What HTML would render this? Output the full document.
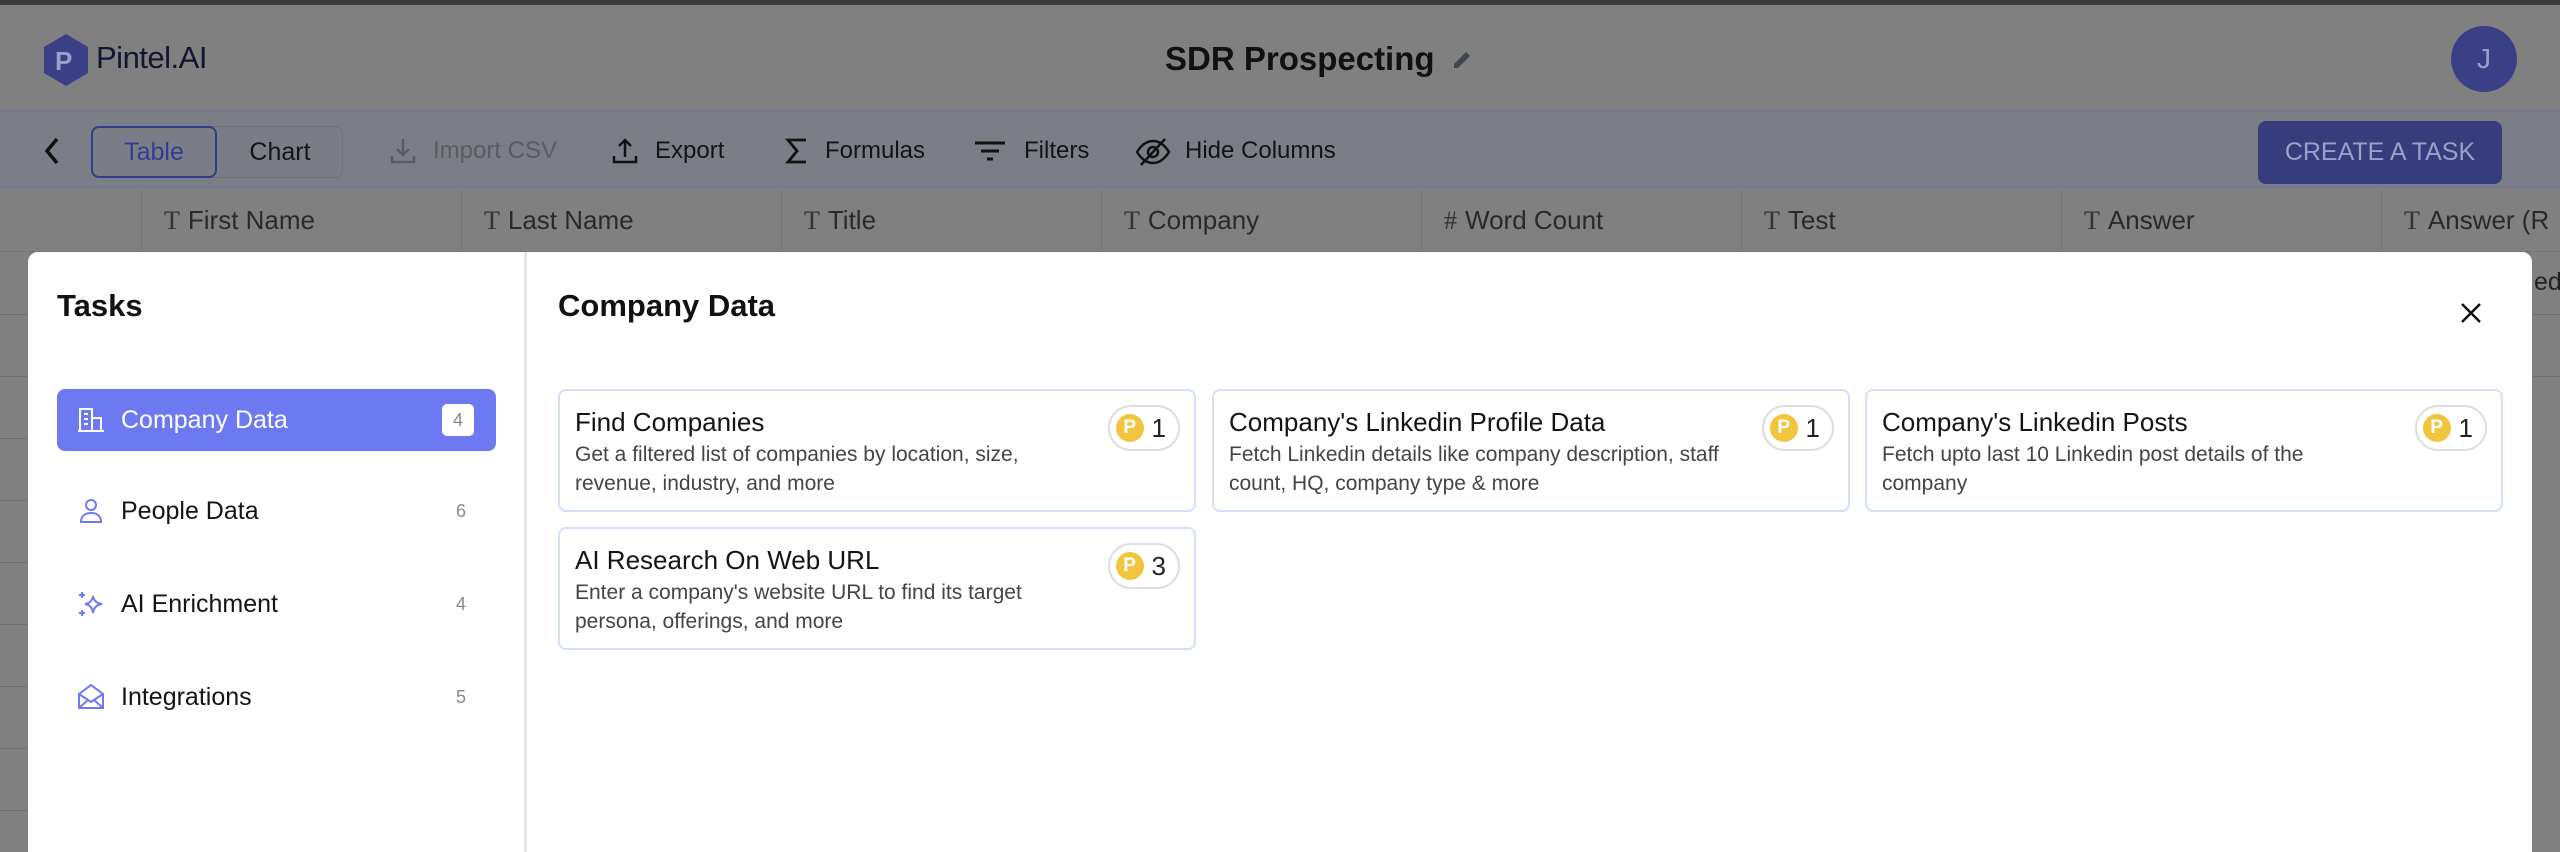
<!DOCTYPE html>
<html><head><meta charset="utf-8"><style>
*{box-sizing:border-box;margin:0;padding:0}
body{width:2560px;height:834px;overflow:hidden;background:#808080;font-family:"Liberation Sans",Arial,sans-serif;position:relative}
.top{position:absolute;left:0;top:0;width:2560px;height:5px;background:#3c3c3c}
.hdr{position:absolute;left:0;top:5px;width:2560px;height:107px;background:#808080;border-bottom:2px solid #737993}
.tb{position:absolute;left:0;top:113px;width:2560px;height:75px;background:#7b7e87;border-bottom:2px solid #737993}
.colh{position:absolute;left:0;top:189px;width:2560px;height:63px;background:#808080;border-bottom:1px solid #767676}
.abs{position:absolute}
.col{position:absolute;top:189px;height:63px;border-left:1px solid #757575;color:#2a2a2a;font-size:26px;line-height:63px;padding-left:22px;white-space:nowrap}
.col .t{font-family:"Liberation Serif",serif;color:#333;margin-right:8px}
.tool{position:absolute;top:113px;height:75px;line-height:75px;font-size:24px;color:#141414;white-space:nowrap}
.ti{position:absolute;top:137px}
.modal{position:absolute;left:28px;top:252px;width:2504px;height:600px;background:#fff;border-radius:10px 10px 0 0}
.side{position:absolute;left:0;top:0;width:499px;height:600px;border-right:3px solid #e6e6e6}
.item{position:absolute;left:29px;width:439px;height:62px;border-radius:8px;font-size:25px;color:#151515;line-height:62px;padding-left:64px}
.item .n{position:absolute;right:30px;top:0;font-size:18px;color:#888}
.item svg{position:absolute;left:20px;top:17px}
.card{position:absolute;width:638px;height:123px;border:2px solid #d5defb;border-radius:8px;padding:16px 0 0 15px}
.card h3{font-size:26px;font-weight:500;color:#141414;line-height:30px}
.card p{font-size:21px;color:#444;line-height:29px;margin-top:3px;white-space:nowrap}
.badge{position:absolute;right:14px;top:14px;height:46px;border:2px solid #ddd;border-radius:23px;padding:0 12px 0 6px;display:flex;align-items:center;gap:8px;font-size:26px;color:#222}
.coin{width:28px;height:28px;border-radius:50%;background:#f2c53f;color:#fff;font-weight:bold;font-size:19px;line-height:28px;text-align:center}
.rows div{position:absolute;left:0;width:28px;height:1px;background:#6f6f6f}
</style></head><body>
<div class="top"></div>
<div class="hdr"></div>
<svg class="abs" style="left:42px;top:34px" width="48" height="52" viewBox="0 0 48 52"><polygon points="24,0 46,13 46,39 24,52 2,39 2,13" fill="#3a3f86"/><text x="13" y="36" font-family="Liberation Sans" font-weight="bold" font-size="26" fill="#9aa0c8">P</text></svg>
<div class="abs" style="left:96px;top:40px;font-size:31px;color:#141530;letter-spacing:-0.5px">Pintel.AI</div>
<div class="abs" style="left:1165px;top:40px;font-size:33px;font-weight:bold;color:#111">SDR Prospecting</div>
<svg class="abs" style="left:1450px;top:48px" width="24" height="24" viewBox="0 0 24 24"><path d="M4 20 L4 16 L16 4 L20 8 L8 20 Z" fill="#3e4650"/></svg>
<div class="abs" style="left:2451px;top:26px;width:66px;height:66px;border-radius:50%;background:#3a3f86;color:#9aa0c8;font-size:28px;line-height:66px;text-align:center">J</div>
<div class="tb"></div>
<svg class="abs" style="left:42px;top:136px" width="20" height="30" viewBox="0 0 20 30"><path d="M15 3 L5 15 L15 27" stroke="#111" stroke-width="3.5" fill="none"/></svg>
<div class="abs" style="left:91px;top:126px;width:252px;height:52px;border-radius:8px;background:#7a7d86;border:1px solid #6f727b"></div>
<div class="abs" style="left:91px;top:126px;width:126px;height:52px;border-radius:8px;border:2px solid #333b8e;color:#343b95;font-size:25px;line-height:48px;text-align:center">Table</div>
<div class="abs" style="left:217px;top:126px;width:126px;height:52px;color:#151515;font-size:25px;line-height:52px;text-align:center">Chart</div>
<svg class="ti" style="left:389px" width="28" height="28" viewBox="0 0 28 28" fill="none" stroke="#5a5c63" stroke-width="2.5"><path d="M14 2v16M8 12l6 6 6-6M3 19v6h22v-6"/></svg>
<div class="tool" style="left:433px;color:#5a5c63">Import CSV</div>
<svg class="ti" style="left:611px" width="28" height="28" viewBox="0 0 28 28" fill="none" stroke="#111" stroke-width="2.5"><path d="M14 20V3M8 9l6-6 6 6M3 19v6h22v-6"/></svg>
<div class="tool" style="left:655px">Export</div>
<svg class="ti" style="left:785px" width="24" height="28" viewBox="0 0 24 28" fill="none" stroke="#111" stroke-width="2.8"><path d="M21 3H3l9 11-9 11h18"/></svg>
<div class="tool" style="left:825px">Formulas</div>
<svg class="ti" style="left:973px" width="34" height="28" viewBox="0 0 34 28" fill="none" stroke="#111" stroke-width="3"><path d="M2 6h30M8 14h18M14 22h6"/></svg>
<div class="tool" style="left:1024px">Filters</div>
<svg class="ti" style="left:1135px" width="36" height="30" viewBox="0 0 36 30" fill="none" stroke="#111" stroke-width="2.5"><path d="M2 15c5-8 11-11 16-11s11 3 16 11c-5 8-11 11-16 11S7 23 2 15z"/><circle cx="18" cy="15" r="5"/><path d="M6 28L30 2"/></svg>
<div class="tool" style="left:1185px">Hide Columns</div>
<div class="abs" style="left:2258px;top:121px;width:244px;height:63px;border-radius:8px;background:#373c7c;color:#9aa0c8;font-size:25px;line-height:63px;text-align:center">CREATE A TASK</div>
<div class="colh"></div>
<div class="col" style="left:141px"><span class="t">T</span>First Name</div>
<div class="col" style="left:461px"><span class="t">T</span>Last Name</div>
<div class="col" style="left:781px"><span class="t">T</span>Title</div>
<div class="col" style="left:1101px"><span class="t">T</span>Company</div>
<div class="col" style="left:1421px"><span class="t">#</span>Word Count</div>
<div class="col" style="left:1741px"><span class="t">T</span>Test</div>
<div class="col" style="left:2061px"><span class="t">T</span>Answer</div>
<div class="col" style="left:2381px"><span class="t">T</span>Answer (R</div>
<div class="abs" style="left:2534px;top:268px;font-size:25px;color:#222">ed</div>
<div class="rows"><div style="top:314px"></div><div style="top:376px"></div><div style="top:438px"></div><div style="top:500px"></div><div style="top:562px"></div><div style="top:624px"></div><div style="top:686px"></div><div style="top:748px"></div><div style="top:810px"></div></div>
<div class="abs" style="left:2532px;top:314px;width:28px;height:1px;background:#6f6f6f"></div>
<div class="abs" style="left:2532px;top:376px;width:28px;height:1px;background:#6f6f6f"></div>
<div class="modal">
 <div class="side">
  <div class="abs" style="left:29px;top:36px;font-size:31px;font-weight:bold;color:#111">Tasks</div>
  <div class="item" style="top:137px;background:#6c79f0;color:#fff">
   <svg width="28" height="28" viewBox="0 0 28 28" fill="none" stroke="#fff" stroke-width="2"><rect x="3" y="3" width="12" height="22"/><path d="M15 12h9v13H15M1 25h26M7 8h4M7 13h4M7 18h4"/></svg>Company Data
   <span class="n" style="right:22px;top:15px;width:32px;height:32px;background:#fff;border-radius:5px;line-height:32px;text-align:center;color:#888">4</span></div>
  <div class="item" style="top:228px"><svg width="28" height="28" viewBox="0 0 28 28" fill="none" stroke="#6c79f0" stroke-width="2"><circle cx="14" cy="8" r="5"/><path d="M4 25c0-6 4-9 10-9s10 3 10 9z"/></svg>People Data<span class="n">6</span></div>
  <div class="item" style="top:321px"><svg width="28" height="28" viewBox="0 0 28 28" fill="none" stroke="#6c79f0" stroke-width="2"><path d="M16 6 Q17 13 25 14 Q17 15 16 23 Q15 15 8 14 Q15 13 16 6z M5 2v6M2 5h6M5 20v6M2 23h6"/></svg>AI Enrichment<span class="n">4</span></div>
  <div class="item" style="top:414px"><svg width="28" height="28" viewBox="0 0 28 28" fill="none" stroke="#6c79f0" stroke-width="2"><path d="M2 11 L14 2 L26 11 V25 H2 Z M2 11 L14 19 L26 11 M2 25 L11 17 M26 25 L17 17"/></svg>Integrations<span class="n">5</span></div>
 </div>
 <div class="abs" style="left:530px;top:36px;font-size:31px;font-weight:bold;color:#111">Company Data</div>
 <svg class="abs" style="left:2431px;top:49px" width="24" height="24" viewBox="0 0 24 24"><path d="M3 3L21 21M21 3L3 21" stroke="#111" stroke-width="2.5"/></svg>
 <div class="card" style="left:530px;top:137px"><h3>Find Companies</h3><p>Get a filtered list of companies by location, size,<br>revenue, industry, and more</p><div class="badge"><div class="coin">P</div>1</div></div>
 <div class="card" style="left:1184px;top:137px"><h3>Company's Linkedin Profile Data</h3><p>Fetch Linkedin details like company description, staff<br>count, HQ, company type &amp; more</p><div class="badge"><div class="coin">P</div>1</div></div>
 <div class="card" style="left:1837px;top:137px"><h3>Company's Linkedin Posts</h3><p>Fetch upto last 10 Linkedin post details of the<br>company</p><div class="badge"><div class="coin">P</div>1</div></div>
 <div class="card" style="left:530px;top:275px"><h3>AI Research On Web URL</h3><p>Enter a company's website URL to find its target<br>persona, offerings, and more</p><div class="badge"><div class="coin">P</div>3</div></div>
</div>
</body></html>
